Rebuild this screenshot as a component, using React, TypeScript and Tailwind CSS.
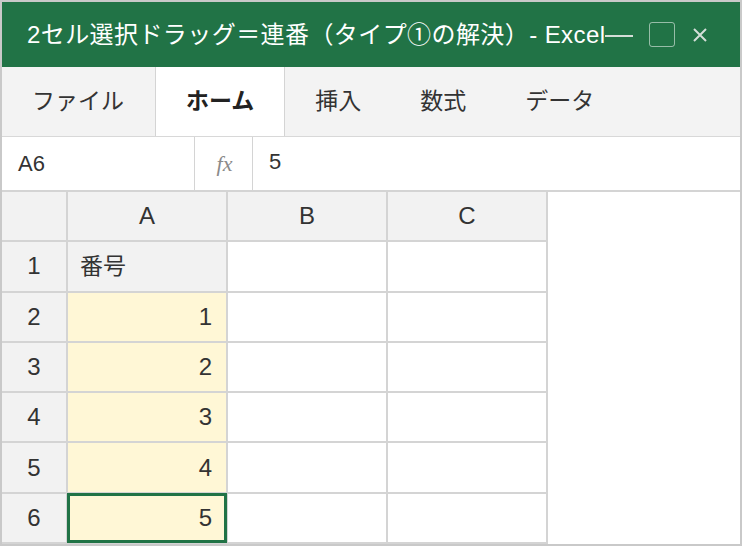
import React from "react";

const font = { fontFamily: '"Liberation Sans", "Noto Sans CJK JP", sans-serif' };

export default function App() {
  const rows = [
    { n: "1", a: "番号", head: true },
    { n: "2", a: "1" },
    { n: "3", a: "2" },
    { n: "4", a: "3" },
    { n: "5", a: "4" },
    { n: "6", a: "5", sel: true },
  ];
  return (
    <div className="w-[742px] h-[546px] bg-[#c9c9c9] p-[2px] overflow-hidden" style={font}>
      <div className="flex flex-col h-full bg-white">
        {/* Title bar */}
        <div className="h-[65px] shrink-0 bg-[#217346] flex items-center pl-[25px] text-white">
          <span className="text-[24px] leading-none whitespace-nowrap tracking-[0.42px]">
            2セル選択ドラッグ＝連番（タイプ①の解決）- Excel
          </span>
          <span className="mt-[3px] w-[28px] h-[2px] bg-[#d4ded8]" />
          <span className="ml-[16px] w-[26px] h-[25px] rounded-[3px] border-[1.5px] border-[#ffffff88]" />
          <svg className="ml-[18px]" width="14" height="14" viewBox="0 0 14 14">
            <path d="M1 1 L13 13 M13 1 L1 13" stroke="#d4ded8" strokeWidth="2" />
          </svg>
        </div>
        {/* Ribbon tabs */}
        <div className="h-[70px] shrink-0 bg-[#f3f3f3] border-b border-[#d8d8d8] flex text-[23px] text-[#333]">
          <div className="pl-[30px] pr-[31px] flex items-center">ファイル</div>
          <div className="px-[30px] flex items-center bg-white border-x border-[#d4d4d4] font-bold text-[#222]">ホーム</div>
          <div className="px-[30px] flex items-center">挿入</div>
          <div className="px-[29px] flex items-center">数式</div>
          <div className="px-[30px] flex items-center">データ</div>
        </div>
        {/* Formula bar */}
        <div className="h-[55px] shrink-0 flex border-b-2 border-[#d4d4d4] bg-white">
          <div className="w-[193px] border-r-[1.5px] border-[#d4d4d4] flex items-center pl-[16px] text-[22px] text-[#333]">A6</div>
          <div className="w-[58px] border-r-[1.5px] border-[#d4d4d4] flex items-center justify-center">
            <span className="italic text-[22px] text-[#8a8a8a] pl-[2px]" style={{ fontFamily: '"Liberation Serif", serif' }}>fx</span>
          </div>
          <div className="flex-1 pl-[16px] pt-[12px] text-[22px] text-[#333] leading-[26px]">5</div>
        </div>
        {/* Grid */}
        <div className="flex-1 flex">
          <div className="grid grid-cols-[64px_158px_158px_158px] grid-rows-[repeat(7,1fr)] gap-[2px] bg-[#d4d4d4] pr-[2px] pb-[2px] text-[24px] text-[#333]">
            <div className="bg-[#f2f2f2]" />
            <div className="bg-[#f2f2f2] flex items-center justify-center">A</div>
            <div className="bg-[#f2f2f2] flex items-center justify-center">B</div>
            <div className="bg-[#f2f2f2] flex items-center justify-center">C</div>
            {rows.map((r) => (
              <React.Fragment key={r.n}>
                <div className="bg-[#f2f2f2] flex items-center justify-center">{r.n}</div>
                {r.head ? (
                  <div className="bg-[#f2f2f2] flex items-center pl-[12px] text-[23px]">{r.a}</div>
                ) : (
                  <div className="relative bg-[#fff7d6] flex items-center justify-end pr-[14px]">
                    {r.a}
                    {r.sel && (
                      <div className="absolute -left-px -right-px -top-px -bottom-px border-[3px] border-[#217346]" />
                    )}
                  </div>
                )}
                <div className="bg-white" />
                <div className="bg-white" />
              </React.Fragment>
            ))}
          </div>
          <div className="flex-1 bg-white" />
        </div>
      </div>
    </div>
  );
}
